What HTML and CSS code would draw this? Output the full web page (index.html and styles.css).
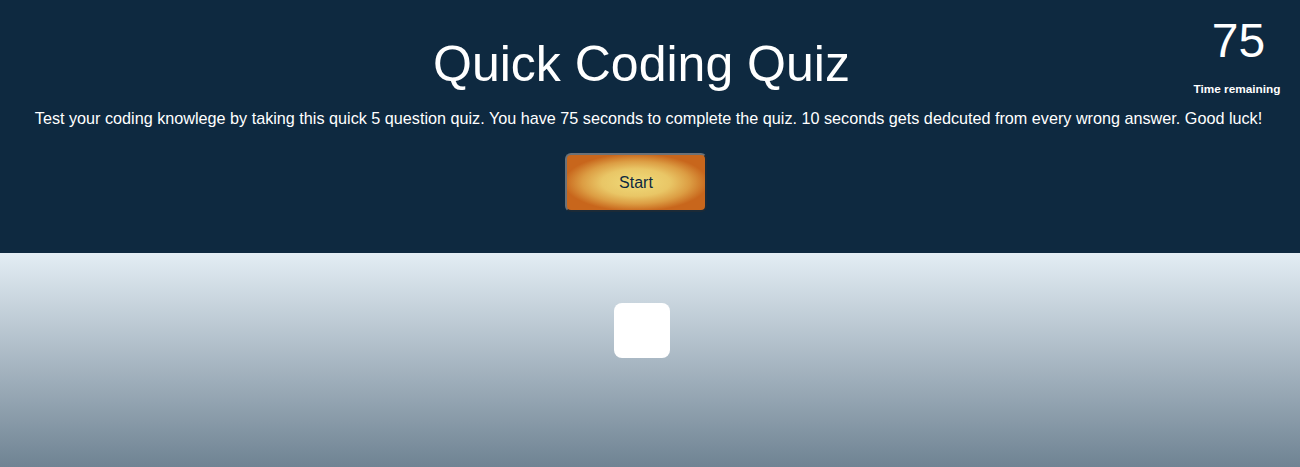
FILE: index.html
```html
<!DOCTYPE html>
<html>
<head>
<meta charset="utf-8">
<link rel="stylesheet" href="styles.css">
</head>
<body>
<header class="header">
  <div class="timer">
    <div class="timer-count">75</div>
    <div class="timer-label">Time remaining</div>
  </div>
  <h1 class="title">Quick Coding Quiz</h1>
  <p class="intro">Test your coding knowlege by taking this quick 5 question quiz. You have 75 seconds to complete the quiz. 10 seconds gets dedcuted from every wrong answer. Good luck!</p>
  <div class="actions">
    <button class="start-btn">Start</button>
  </div>
</header>
<main class="content">
  <div class="card"></div>
</main>
</body>
</html>
```
FILE: styles.css
```css
html, body {
  margin: 0;
  padding: 0;
  height: 100%;
}
body {
  font-family: "Liberation Sans", Arial, sans-serif;
  background: #0e2940;
  overflow: hidden;
}
.header {
  position: relative;
  background: #0e2940;
  height: 253px;
  box-sizing: border-box;
  padding-top: 35px;
  color: #ffffff;
}
.timer {
  position: absolute;
  top: 13px;
  right: 16px;
  width: 94px;
  text-align: center;
}
.timer-count {
  font-size: 48px;
  line-height: 56px;
  padding-left: 3px;
}
.timer-label {
  font-size: 11.8px;
  font-weight: bold;
  line-height: 14px;
  margin-top: 13px;
}
.title {
  margin: 0;
  font-size: 50px;
  font-weight: normal;
  line-height: 58px;
  text-align: center;
  padding-right: 17px;
}
.intro {
  margin: 16px 0 0;
  font-size: 16.2px;
  line-height: 18px;
  text-align: center;
  padding-right: 3px;
}
.actions {
  display: flex;
  justify-content: center;
  margin-top: 26px;
  padding-right: 28px;
}
.start-btn {
  width: 142px;
  height: 59px;
  border-radius: 6px;
  border: 2px solid #6b7177;
  border-right-color: #1b2a37;
  border-bottom-color: #1b2a37;
  background: radial-gradient(ellipse at center, #efdb7a 0%, #e9c666 35%, #dc9d43 55%, #c8661c 74%);
  font-family: "Liberation Sans", Arial, sans-serif;
  font-size: 16px;
  color: #0e2940;
  padding: 0;
}
.content {
  height: calc(100% - 253px);
  min-height: 214px;
  background: linear-gradient(to bottom, #e3edf4 0%, #6f8393 100%);
  display: flex;
  justify-content: center;
  padding-top: 50px;
  box-sizing: border-box;
}
.card {
  width: 56px;
  height: 55px;
  background: #ffffff;
  border-radius: 8px;
  margin-left: -16px;
}
```
